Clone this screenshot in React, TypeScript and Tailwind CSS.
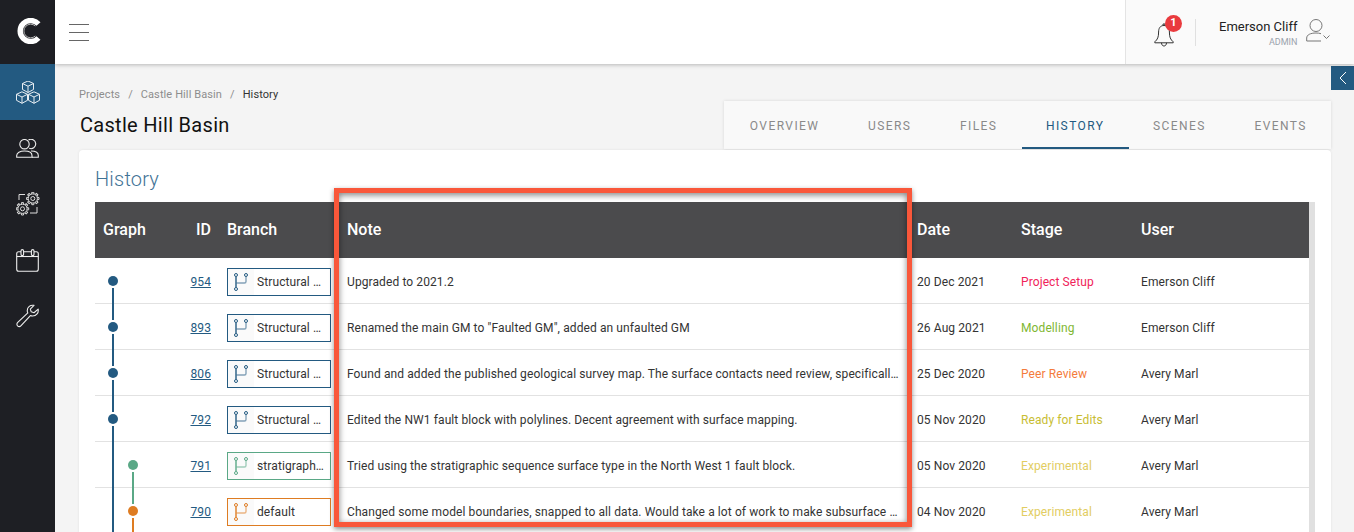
import React from 'react';

const BLUE = '#235a81';
const GREEN = '#5aa886';
const ORANGE = '#de7c22';

type Row = {
  id: string;
  branch: string;
  color: string;
  note: string;
  date: string;
  stage: string;
  stageClass: string;
  user: string;
  graph: 'first' | 'blue' | 'green' | 'orange';
};

const rows: Row[] = [
  { id: '954', branch: 'Structural …', color: BLUE, note: 'Upgraded to 2021.2', date: '20 Dec 2021', stage: 'Project Setup', stageClass: 'text-[#f0245a]', user: 'Emerson Cliff', graph: 'first' },
  { id: '893', branch: 'Structural …', color: BLUE, note: 'Renamed the main GM to "Faulted GM", added an unfaulted GM', date: '26 Aug 2021', stage: 'Modelling', stageClass: 'text-[#7fb733]', user: 'Emerson Cliff', graph: 'blue' },
  { id: '806', branch: 'Structural …', color: BLUE, note: 'Found and added the published geological survey map. The surface contacts need review, specificall…', date: '25 Dec 2020', stage: 'Peer Review', stageClass: 'text-[#f47b3b]', user: 'Avery Marl', graph: 'blue' },
  { id: '792', branch: 'Structural …', color: BLUE, note: 'Edited the NW1 fault block with polylines. Decent agreement with surface mapping.', date: '05 Nov 2020', stage: 'Ready for Edits', stageClass: 'text-[#c8bd33]', user: 'Avery Marl', graph: 'blue' },
  { id: '791', branch: 'stratigraph…', color: GREEN, note: 'Tried using the stratigraphic sequence surface type in the North West 1 fault block.', date: '05 Nov 2020', stage: 'Experimental', stageClass: 'text-[#e2cd62]', user: 'Avery Marl', graph: 'green' },
  { id: '790', branch: 'default', color: ORANGE, note: 'Changed some model boundaries, snapped to all data. Would take a lot of work to make subsurface …', date: '04 Nov 2020', stage: 'Experimental', stageClass: 'text-[#e2cd62]', user: 'Avery Marl', graph: 'orange' },
];

function Logo() {
  return (
    <svg width="24" height="26" viewBox="0 0 24 26" fill="none">
      <path d="M21.5 6A10.5 10.5 0 1 0 21.5 20" stroke="#fff" strokeWidth="5.4" />
      <path d="M18.3 8A6.8 6.8 0 1 0 18.3 18" stroke="#b5b5b5" strokeWidth="1" />
    </svg>
  );
}

function Cubes() {
  const cube = (x: number, y: number) => (
    <g transform={`translate(${x} ${y})`}>
      <path d="M5.5 0L11 2.5V8.5L5.5 11.5L0 8.5V2.5Z" />
      <path d="M0 2.5L5.5 5.2L11 2.5M5.5 5.2V11.5" />
    </g>
  );
  return (
    <svg width="24" height="23" viewBox="0 0 24 23" fill="none" stroke="#e8eef3" strokeWidth="1">
      {cube(6.5, 0)}
      {cube(0.5, 10.8)}
      {cube(12.5, 10.8)}
    </svg>
  );
}

function Users() {
  return (
    <svg width="23" height="19" viewBox="0 0 23 19" fill="none" stroke="#eee" strokeWidth="1.1">
      <circle cx="8.5" cy="5.2" r="4.7" />
      <path d="M12.5 1A4.7 4.7 0 1 1 13.2 9.3" />
      <path d="M0.7 18.3V16.5C0.7 13.8 4 12 8.5 12S16 13.8 16 16.5V18.3Z" />
      <path d="M15 12C19.5 12 22.3 13.8 22.3 16.5V18.3H16" />
    </svg>
  );
}

function Gear({ x, y }: { x: number; y: number }) {
  const teeth = [0, 45, 90, 135, 180, 225, 270, 315];
  return (
    <g transform={`translate(${x} ${y})`}>
      <circle r="4.6" />
      <circle r="2" />
      {teeth.map((a) => (
        <path key={a} d="M-1.2 -4.6L-1 -6.2H1L1.2 -4.6" transform={`rotate(${a})`} />
      ))}
    </g>
  );
}

function Gears() {
  return (
    <svg width="24" height="24" viewBox="0 0 24 24" fill="none" stroke="#ddd" strokeWidth="1">
      <Gear x={16.8} y={6.5} />
      <Gear x={6.5} y={16.8} />
      <path d="M3 8V2.5H9" />
      <path d="M14 21H21V15" />
    </svg>
  );
}

function Calendar() {
  return (
    <svg width="23" height="23" viewBox="0 0 23 23" fill="none" stroke="#eee" strokeWidth="1.1">
      <rect x="0.7" y="2.8" width="21.6" height="19.4" rx="2" />
      <path d="M0.7 7.5H22.3" />
      <rect x="5" y="0.6" width="2.6" height="6" rx="1.3" fill="#1e1f24" />
      <rect x="15.4" y="0.6" width="2.6" height="6" rx="1.3" fill="#1e1f24" />
    </svg>
  );
}

function Wrench() {
  return (
    <svg width="24" height="24" viewBox="0 0 26 26" fill="none" stroke="#eee" strokeWidth="1.2" strokeLinejoin="round">
      <path d="M19.5 1.5L15.5 5.5L16.5 8.5L19.5 9.5L24 5.5C24.8 9.5 22 13 18 13C17 13 16.3 12.8 15.6 12.5L5.5 23.5C4.2 24.8 2.6 24.6 1.7 23.7C0.8 22.8 0.6 21.2 1.9 20L12.8 9.7C12.3 8.8 12.2 8 12.2 7C12.2 3.5 15.5 0.6 19.5 1.5Z" />
    </svg>
  );
}

function Bell() {
  return (
    <svg width="20" height="24" viewBox="0 0 20 24" fill="none" stroke="#333" strokeWidth="1">
      <path d="M10 2.5C6 2.5 4.6 5.5 4.6 9C4.6 14 3.6 16.5 0.8 18.8V19.8H19.2V18.8C16.4 16.5 15.4 14 15.4 9C15.4 5.5 14 2.5 10 2.5Z" />
      <path d="M7.5 19.8C7.5 22 8.8 23 10 23S12.5 22 12.5 19.8" />
      <path d="M9 2.5V1H11V2.5" />
    </svg>
  );
}

function UserIcon() {
  return (
    <svg width="24" height="23" viewBox="0 0 24 23" fill="none" stroke="#777" strokeWidth="1">
      <circle cx="10" cy="6.5" r="6" />
      <path d="M0.7 22V19C0.7 15.8 4.5 14 10 14C12 14 13.5 14.2 15 14.7" />
      <path d="M0.7 22H15" />
      <path d="M17.5 16.5L20.5 19.5L23.5 16.5" />
    </svg>
  );
}

function BranchIcon({ color }: { color: string }) {
  return (
    <svg width="14" height="18" viewBox="0 0 14 18" fill="none" stroke={color} strokeWidth="1">
      <path d="M2 3.5V14.5" strokeWidth="1.4" />
      <path d="M2.5 10H10.5C11.5 10 12 9.5 12 8.5V3.5" strokeWidth="1.4" opacity="0.55" />
      <circle cx="2" cy="2" r="1.5" fill="#fafafa" />
      <circle cx="12" cy="2" r="1.5" fill="#fafafa" />
      <circle cx="2" cy="16" r="1.5" fill="#fafafa" />
    </svg>
  );
}

function GraphCell({ kind }: { kind: Row['graph'] }) {
  return (
    <svg width="60" height="46" viewBox="0 0 60 46" fill="none" className="-mt-[2px] block self-start">
      {(kind === 'first' || kind === 'blue') && (
        <>
          {kind === 'blue' && <path d="M18 0V16" stroke={BLUE} strokeWidth="2" />}
          <circle cx="18" cy="23" r="5" fill={BLUE} />
          <path d="M18 30V46" stroke={BLUE} strokeWidth="2" />
        </>
      )}
      {(kind === 'green' || kind === 'orange') && <path d="M18 0V46" stroke={BLUE} strokeWidth="2" />}
      {kind === 'green' && (
        <>
          <circle cx="38" cy="23" r="5" fill={GREEN} />
          <path d="M38 30V46" stroke={GREEN} strokeWidth="2" />
        </>
      )}
      {kind === 'orange' && (
        <>
          <path d="M38 0V16" stroke={GREEN} strokeWidth="2" />
          <circle cx="38" cy="23" r="5" fill={ORANGE} />
          <path d="M38 30V46" stroke={ORANGE} strokeWidth="2" />
        </>
      )}
    </svg>
  );
}

const gridCols = 'grid grid-cols-[60px_64px_120px_570px_104px_120px_176px]';

export default function App() {
  return (
    <div className="relative flex h-[532px] w-[1354px] overflow-hidden bg-[#f4f4f4] font-['Roboto',sans-serif] text-[#333]">
      {/* sidebar */}
      <aside className="flex w-[55px] shrink-0 flex-col bg-[#1e1f24]">
        <div className="flex h-[64px] items-center justify-center pb-[3px] pl-[2px]"><Logo /></div>
        <div className="flex h-[56px] items-center justify-center bg-[#235a81]"><Cubes /></div>
        <div className="flex h-[56px] items-center justify-center"><Users /></div>
        <div className="flex h-[56px] items-center justify-center"><Gears /></div>
        <div className="flex h-[56px] items-center justify-center"><Calendar /></div>
        <div className="flex h-[56px] items-center justify-center"><Wrench /></div>
      </aside>

      <div className="flex min-w-0 flex-1 flex-col">
        {/* top bar */}
        <header className="relative z-10 flex h-[64px] shrink-0 items-stretch justify-between bg-white shadow-[0_1px_4px_rgba(0,0,0,0.25)]">
          <div className="flex items-center pl-[14px]">
            <div className="flex w-[20px] flex-col gap-[7px]">
              <span className="h-px bg-[#666]" />
              <span className="h-px bg-[#666]" />
              <span className="h-px bg-[#666]" />
            </div>
          </div>
          <div className="flex w-[229px] items-center border-l border-[#e4e4e4] bg-[#fafafa]">
            <div className="relative ml-[28px] mt-[5px] flex">
              <Bell />
              <span className="absolute -right-[8px] -top-[8px] flex h-[17px] w-[17px] items-center justify-center rounded-full bg-[#e93a3e] text-[11px] font-bold text-white">1</span>
            </div>
            <div className="ml-[21px] h-[27px] w-px bg-[#e0e0e0]" />
            <div className="ml-[23px] mt-[3px] flex flex-col items-end">
              <span className="text-[13px] leading-[16px] text-[#222]">Emerson Cliff</span>
              <span className="text-[9px] leading-[14px] text-[#9aa3ad]">ADMIN</span>
            </div>
            <div className="ml-[9px] mt-[-3px]"><UserIcon /></div>
          </div>
        </header>

        {/* page */}
        <main className="relative flex min-h-0 flex-1 flex-col">
          <div className="flex h-[86px] shrink-0 items-end justify-between pl-[24px] pr-[23px]">
            <div className="pb-[13px]">
              <div className="flex gap-[8px] text-[11px] leading-[14px] tracking-[0.1px] text-[#8d8d8d]">
                <span>Projects</span><span>/</span><span>Castle Hill Basin</span><span>/</span><span className="text-[#333]">History</span>
              </div>
              <h1 className="ml-px mt-[11px] text-[20px] font-normal leading-[24px] tracking-[0.3px] text-[#111]">Castle Hill Basin</h1>
            </div>
            <nav className="mb-px flex h-[48px] w-[607px] items-stretch bg-[#f9f9f9] pl-[1.5px] text-[12px] tracking-[1.42px] text-[#8a8a8a] shadow-[0_0_3px_rgba(0,0,0,0.12)]">
              {['OVERVIEW', 'USERS', 'FILES', 'HISTORY', 'SCENES', 'EVENTS'].map((t) => (
                <span
                  key={t}
                  className={
                    t === 'HISTORY'
                      ? 'flex items-center border-b-2 border-[#235a81] px-[24.3px] pt-[4px] text-[#235a81]'
                      : 'flex items-center border-b-2 border-transparent px-[24.3px] pt-[4px]'
                  }
                >
                  {t}
                </span>
              ))}
            </nav>
          </div>

          <section className="ml-[24px] mr-[23px] flex-1 rounded-t bg-white pl-[16px] pt-[17px] shadow-[0_0_3px_rgba(0,0,0,0.08)]">
            <h2 className="text-[20px] font-light leading-[24px] tracking-[0.2px] text-[#3f7396]">History</h2>
            <div className="mt-[11px] w-[1220px] border-r-[6px] border-[#e0e0e0]">
              <div className={`${gridCols} h-[56px] items-center bg-[#4b4b4d] text-[16px] font-medium text-white`}>
                <span className="pl-[8px]">Graph</span>
                <span className="pr-[8px] text-right">ID</span>
                <span className="pl-[8px]">Branch</span>
                <span className="pl-[8px]">Note</span>
                <span className="pl-[8px]">Date</span>
                <span className="pl-[8px]">Stage</span>
                <span className="pl-[8px]">User</span>
              </div>
              {rows.map((r) => (
                <div key={r.id} className={`${gridCols} h-[46px] grid-rows-[43px] items-center border-b border-[#e2e2e2] pt-[2px] text-[12px] tracking-[0.1px]`}>
                  <GraphCell kind={r.graph} />
                  <span className="pr-[8px] text-right text-[#235a81] underline">{r.id}</span>
                  <div className="pl-[8px]">
                    <div className="flex h-[28px] w-[104px] items-stretch border bg-white" style={{ borderColor: r.color }}>
                      <span className="flex w-[26px] shrink-0 items-center justify-center bg-[#fafafa]"><BranchIcon color={r.color} /></span>
                      <span className="flex items-center pl-[3px] text-[#333]">{r.branch}</span>
                    </div>
                  </div>
                  <span className="pl-[8px] pr-[8px] text-[#333]">{r.note}</span>
                  <span className="pl-[8px] text-[#333]">{r.date}</span>
                  <span className={`pl-[8px] ${r.stageClass}`}>{r.stage}</span>
                  <span className="pl-[8px] text-[#333]">{r.user}</span>
                </div>
              ))}
            </div>
          </section>

          {/* collapse tab */}
          <div className="absolute right-0 top-[2px] flex h-[24px] w-[23px] items-center justify-center bg-[#235a81]">
            <svg width="8" height="14" viewBox="0 0 8 14" fill="none" stroke="#fff" strokeWidth="1"><path d="M7 1L1 7L7 13" /></svg>
          </div>
        </main>
      </div>

      {/* highlight annotation */}
      <div className="absolute left-[334px] top-[188px] h-[339px] w-[578px] border-[5px] border-[#f9573a] shadow-[0_2px_5px_rgba(0,0,0,0.45),inset_0_2px_6px_rgba(0,0,0,0.5)]" />
    </div>
  );
}
